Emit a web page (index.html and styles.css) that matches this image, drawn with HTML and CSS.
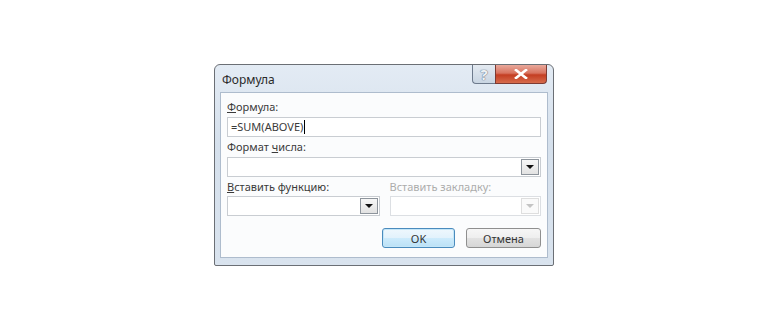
FILE: index.html
```html
<!DOCTYPE html>
<html lang="ru">
<head>
    <meta charset="UTF-8">
    <title>Формула</title>
    <link rel="stylesheet" href="styles.css">
</head>
<body>
<div class="page">
    <div class="dialog">
        <div class="titlebar">
            <span class="title">Формула</span>
            <div class="caption-buttons">
                <div class="cap-btn help">?</div>
                <div class="cap-btn close">
                    <svg width="14" height="10" viewBox="0 0 14 10">
                        <path d="M2 1 L12 9 M12 1 L2 9" stroke="#fff" stroke-width="2.6" stroke-linecap="square"/>
                    </svg>
                </div>
            </div>
        </div>
        <div class="panel">
            <div class="label"><u>Ф</u>ормула:</div>
            <div class="field">=SUM(ABOVE)<span class="caret"></span></div>

            <div class="label">Формат <u>ч</u>исла:</div>
            <div class="combo">
                <div class="drop"><span class="arrow"></span></div>
            </div>

            <div class="row">
                <div class="col">
                    <div class="label"><u>В</u>ставить функцию:</div>
                    <div class="combo">
                        <div class="drop"><span class="arrow"></span></div>
                    </div>
                </div>
                <div class="col right">
                    <div class="label disabled">Вставить закладку:</div>
                    <div class="combo off">
                        <div class="drop"><span class="arrow"></span></div>
                    </div>
                </div>
            </div>

            <div class="buttons">
                <button class="button default">OK</button>
                <button class="button">Отмена</button>
            </div>
        </div>
    </div>
</div>
</body>
</html>
```

FILE: styles.css
```css
body {
    margin: 0;
    background-color: #fff;
    font-family: "Noto Sans", "Open Sans", sans-serif;
    font-size: 11px;
    color: #3a3a3a;
}
.page {
    padding: 64px 0 0 214px;
}
.dialog {
    width: 340px;
    height: 202px;
    border: 1px solid #6b6f75;
    border-radius: 6px 6px 2px 2px;
    background: linear-gradient(to bottom, #e3ebf4 0%, #d5e0ec 40%, #d9e3ee 100%);
    padding: 0 5px 7px 5px;
    box-sizing: border-box;
}
.titlebar {
    height: 27px;
    display: flex;
    align-items: flex-start;
    justify-content: space-between;
}
.title {
    font-size: 12px;
    color: #2a2a2a;
    padding: 6px 0 0 2px;
}
.caption-buttons {
    display: flex;
    margin-right: 1px;
}
.cap-btn {
    height: 18px;
    border: 1px solid #6d7a8c;
    border-top: none;
    display: flex;
    align-items: center;
    justify-content: center;
}
.help {
    width: 22px;
    border-radius: 0 0 0 4px;
    border-right: none;
    background: linear-gradient(to bottom, #e4eaf1, #c9d5e2);
    color: #eef1f5;
    font-weight: bold;
    font-size: 15px;
    line-height: 18px;
    text-shadow: 0 0 1px #5b6a80, 0 0 1px #5b6a80;
}
.close {
    width: 50px;
    border-radius: 0 0 4px 0;
    border-color: #7d3b33;
    background: linear-gradient(to bottom, #e9a99c 0%, #d8735f 45%, #c43e22 55%, #d66b4c 100%);
}
.panel {
    height: 166px;
    background-color: #fbfcfd;
    border: 1px solid #aebccd;
    padding: 7px 6px 0 6px;
    box-sizing: border-box;
}
.label {
    height: 14px;
    line-height: 14px;
    margin-bottom: 3px;
}
.label u {
    text-decoration: underline;
}
.disabled {
    color: #acacac;
}
.field {
    height: 20px;
    border: 1px solid #c9cdd2;
    background-color: #fff;
    box-sizing: border-box;
    padding-left: 3px;
    line-height: 18px;
    margin-bottom: 3px;
}
.caret {
    display: inline-block;
    width: 1px;
    height: 14px;
    margin-left: 1px;
    background-color: #000;
    vertical-align: -3px;
}
.combo {
    height: 20px;
    border: 1px solid #c9cdd2;
    background-color: #fff;
    box-sizing: border-box;
    display: flex;
    justify-content: flex-end;
    margin-bottom: 3px;
}
.row .label {
    margin-bottom: 2px;
}
.drop {
    width: 16px;
    border: 1px solid #8d949c;
    margin: 1px;
    background: linear-gradient(to bottom, #f7f7f7, #e2e2e2);
    display: flex;
    align-items: center;
    justify-content: center;
}
.arrow {
    width: 0;
    height: 0;
    border-left: 4px solid transparent;
    border-right: 4px solid transparent;
    border-top: 4px solid #111;
}
.off {
    border-color: #dcdfe3;
}
.off .drop {
    border-color: #dedede;
    background: #fafafa;
}
.off .arrow {
    border-top-color: #c4c4c4;
}
.row {
    display: flex;
    gap: 10px;
}
.col {
    width: 153px;
}
.col.right {
    width: 152px;
}
.buttons {
    display: flex;
    justify-content: flex-end;
    gap: 11px;
    margin-top: 9px;
}
.button {
    width: 75px;
    height: 20px;
    font-family: "Noto Sans", "Open Sans", sans-serif;
    font-size: 11px;
    color: #333;
    border: 1px solid #8f8f8f;
    border-radius: 3px;
    background: linear-gradient(to bottom, #f6f6f6 0%, #eeeeee 50%, #e2e2e2 51%, #d6d6d6 100%);
    padding: 0;
}
.button.default {
    width: 73px;
    border-color: #4a8bbd;
    background: linear-gradient(to bottom, #eef7fd 0%, #e2f2fc 50%, #cdebfc 51%, #bbe1f6 100%);
    box-shadow: inset 0 0 0 1px #c4e6f8;
}
```
